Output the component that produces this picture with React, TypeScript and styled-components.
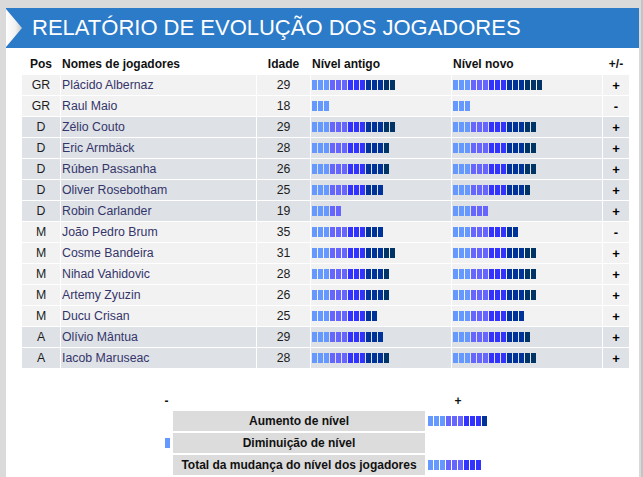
import React from "react";
import styled, { createGlobalStyle } from "styled-components";

const Global = createGlobalStyle`
  html, body { margin: 0; padding: 0; }
  body {
    font-family: "Liberation Sans", Arial, sans-serif;
    background: #dadada;
  }
`;

const Page = styled.div`
  min-height: 477px;
  padding: 8px 4px 0 6px;
  box-sizing: border-box;
  background: #dadada;
  box-shadow: inset -2px 0 0 #c4c4c4;
`;

const Panel = styled.div`
  background: #ffffff;
  min-height: 469px;
`;

const Header = styled.div`
  height: 40px;
  background: #2b7bc9;
  display: flex;
  align-items: center;
  gap: 10px;
`;

const Title = styled.h1`
  margin: 0;
  font-weight: normal;
  font-size: 22px;
  color: #ffffff;
  letter-spacing: 0;
  line-height: 1;
`;

const Body = styled.div`
  padding: 6px 9px 0 16px;
`;

const Table = styled.div`
  display: flex;
  flex-direction: column;
  gap: 1px;
  width: 607px;
`;

const Row = styled.div<{ $bg?: string }>`
  display: grid;
  grid-template-columns: 38px 195px 53px 140px 150px 26px;
  column-gap: 1px;
  height: 20px;
  & > * {
    background: ${(p) => p.$bg || "transparent"};
  }
`;

const Cell = styled.div<{ $align?: string; $color?: string; $bold?: boolean; $size?: number }>`
  display: flex;
  align-items: center;
  justify-content: ${(p) => p.$align || "flex-start"};
  padding: 0 1px;
  font-size: ${(p) => p.$size || 12.3}px;
  font-weight: ${(p) => (p.$bold ? "bold" : "normal")};
  color: ${(p) => p.$color || "#1c1c1c"};
  white-space: nowrap;
  overflow: hidden;
`;

const HeadCell = styled(Cell)`
  font-weight: bold;
  font-size: 12px;
  color: #111;
`;

const Bar = styled.div`
  display: flex;
  gap: 1px;
  height: 10px;
`;

const Seg = styled.span<{ $c: string }>`
  width: 5px;
  height: 10px;
  background: ${(p) => p.$c};
`;

const Summary = styled.div`
  margin-top: 25px;
  width: 607px;
  display: flex;
  justify-content: center;
`;

const SumGrid = styled.div`
  display: grid;
  grid-template-columns: 9px 252px 62px;
  grid-auto-rows: 20px;
  grid-template-rows: 16px;
  gap: 2px;
`;

const SumSign = styled.div<{ $align?: string }>`
  display: flex;
  align-items: center;
  justify-content: center;
  font-weight: bold;
  font-size: 12px;
  color: #111;
`;

const SumLabel = styled.div`
  background: #dcdcdc;
  display: flex;
  align-items: center;
  justify-content: center;
  font-weight: bold;
  font-size: 12px;
  color: #111;
`;

const SumBarCell = styled.div<{ $side: "left" | "right" }>`
  display: flex;
  align-items: center;
  justify-content: ${(p) => (p.$side === "left" ? "flex-end" : "flex-start")};
  padding: ${(p) => (p.$side === "left" ? "0 1px 0 0" : "0 0 0 1px")};
`;

const COLORS = ["#6699ff", "#6666ff", "#3333ff", "#003399", "#003366"];

function Level({ n, reverse }: { n: number; reverse?: boolean }) {
  const segs = Array.from({ length: n }, (_, i) => COLORS[Math.min(Math.floor(i / 3), 4)]);
  if (reverse) segs.reverse();
  return (
    <Bar>
      {segs.map((c, i) => (
        <Seg key={i} $c={c} />
      ))}
    </Bar>
  );
}

type P = [string, string, number, number, number, string];

const players: P[] = [
  ["GR", "Plácido Albernaz", 29, 14, 15, "+"],
  ["GR", "Raul Maio", 18, 3, 3, "-"],
  ["D", "Zélio Couto", 29, 14, 14, "+"],
  ["D", "Eric Armbäck", 28, 13, 14, "+"],
  ["D", "Rúben Passanha", 26, 13, 14, "+"],
  ["D", "Oliver Rosebotham", 25, 12, 13, "+"],
  ["D", "Robin Carlander", 19, 5, 6, "+"],
  ["M", "João Pedro Brum", 35, 12, 11, "-"],
  ["M", "Cosme Bandeira", 31, 14, 14, "+"],
  ["M", "Nihad Vahidovic", 28, 13, 14, "+"],
  ["M", "Artemy Zyuzin", 26, 13, 14, "+"],
  ["M", "Ducu Crisan", 25, 11, 12, "+"],
  ["A", "Olívio Mântua", 29, 12, 13, "+"],
  ["A", "Iacob Maruseac", 28, 13, 14, "+"],
];

const rowBg = (pos: string) => (pos === "D" || pos === "A" ? "#dee2e6" : "#f2f2f2");

function Chevron() {
  return (
    <svg width="16" height="40" viewBox="0 0 16 40" style={{ display: "block", flex: "none" }}>
      <defs>
        <linearGradient id="chev" x1="0" y1="0" x2="1" y2="0">
          <stop offset="0" stopColor="#ffffff" />
          <stop offset="0.6" stopColor="#f0f0f0" />
          <stop offset="1" stopColor="#c8c8c8" />
        </linearGradient>
      </defs>
      <polygon points="0,1 16,20 0,39" fill="url(#chev)" />
    </svg>
  );
}

export default function App() {
  return (
    <>
      <Global />
      <Page>
        <Panel>
          <Header>
            <Chevron />
            <Title>RELATÓRIO DE EVOLUÇÃO DOS JOGADORES</Title>
          </Header>
          <Body>
            <Table>
              <Row>
                <HeadCell $align="center">Pos</HeadCell>
                <HeadCell>Nomes de jogadores</HeadCell>
                <HeadCell $align="center">Idade</HeadCell>
                <HeadCell>Nível antigo</HeadCell>
                <HeadCell>Nível novo</HeadCell>
                <HeadCell $align="center">+/-</HeadCell>
              </Row>
              {players.map(([pos, name, age, oldL, newL, sign]) => (
                <Row key={name} $bg={rowBg(pos)}>
                  <Cell $align="center">{pos}</Cell>
                  <Cell $color="#35356b">{name}</Cell>
                  <Cell $align="center">{age}</Cell>
                  <Cell>
                    <Level n={oldL} />
                  </Cell>
                  <Cell>
                    <Level n={newL} />
                  </Cell>
                  <Cell $align="center" $bold $size={13} $color="#000">
                    {sign}
                  </Cell>
                </Row>
              ))}
            </Table>
            <Summary>
              <SumGrid>
                <SumSign>-</SumSign>
                <div />
                <SumSign>+</SumSign>

                <SumBarCell $side="left" />
                <SumLabel>Aumento de nível</SumLabel>
                <SumBarCell $side="right">
                  <Level n={10} />
                </SumBarCell>

                <SumBarCell $side="left">
                  <Level n={1} reverse />
                </SumBarCell>
                <SumLabel>Diminuição de nível</SumLabel>
                <SumBarCell $side="right" />

                <SumBarCell $side="left" />
                <SumLabel>Total da mudança do nível dos jogadores</SumLabel>
                <SumBarCell $side="right">
                  <Level n={9} />
                </SumBarCell>
              </SumGrid>
            </Summary>
          </Body>
        </Panel>
      </Page>
    </>
  );
}
